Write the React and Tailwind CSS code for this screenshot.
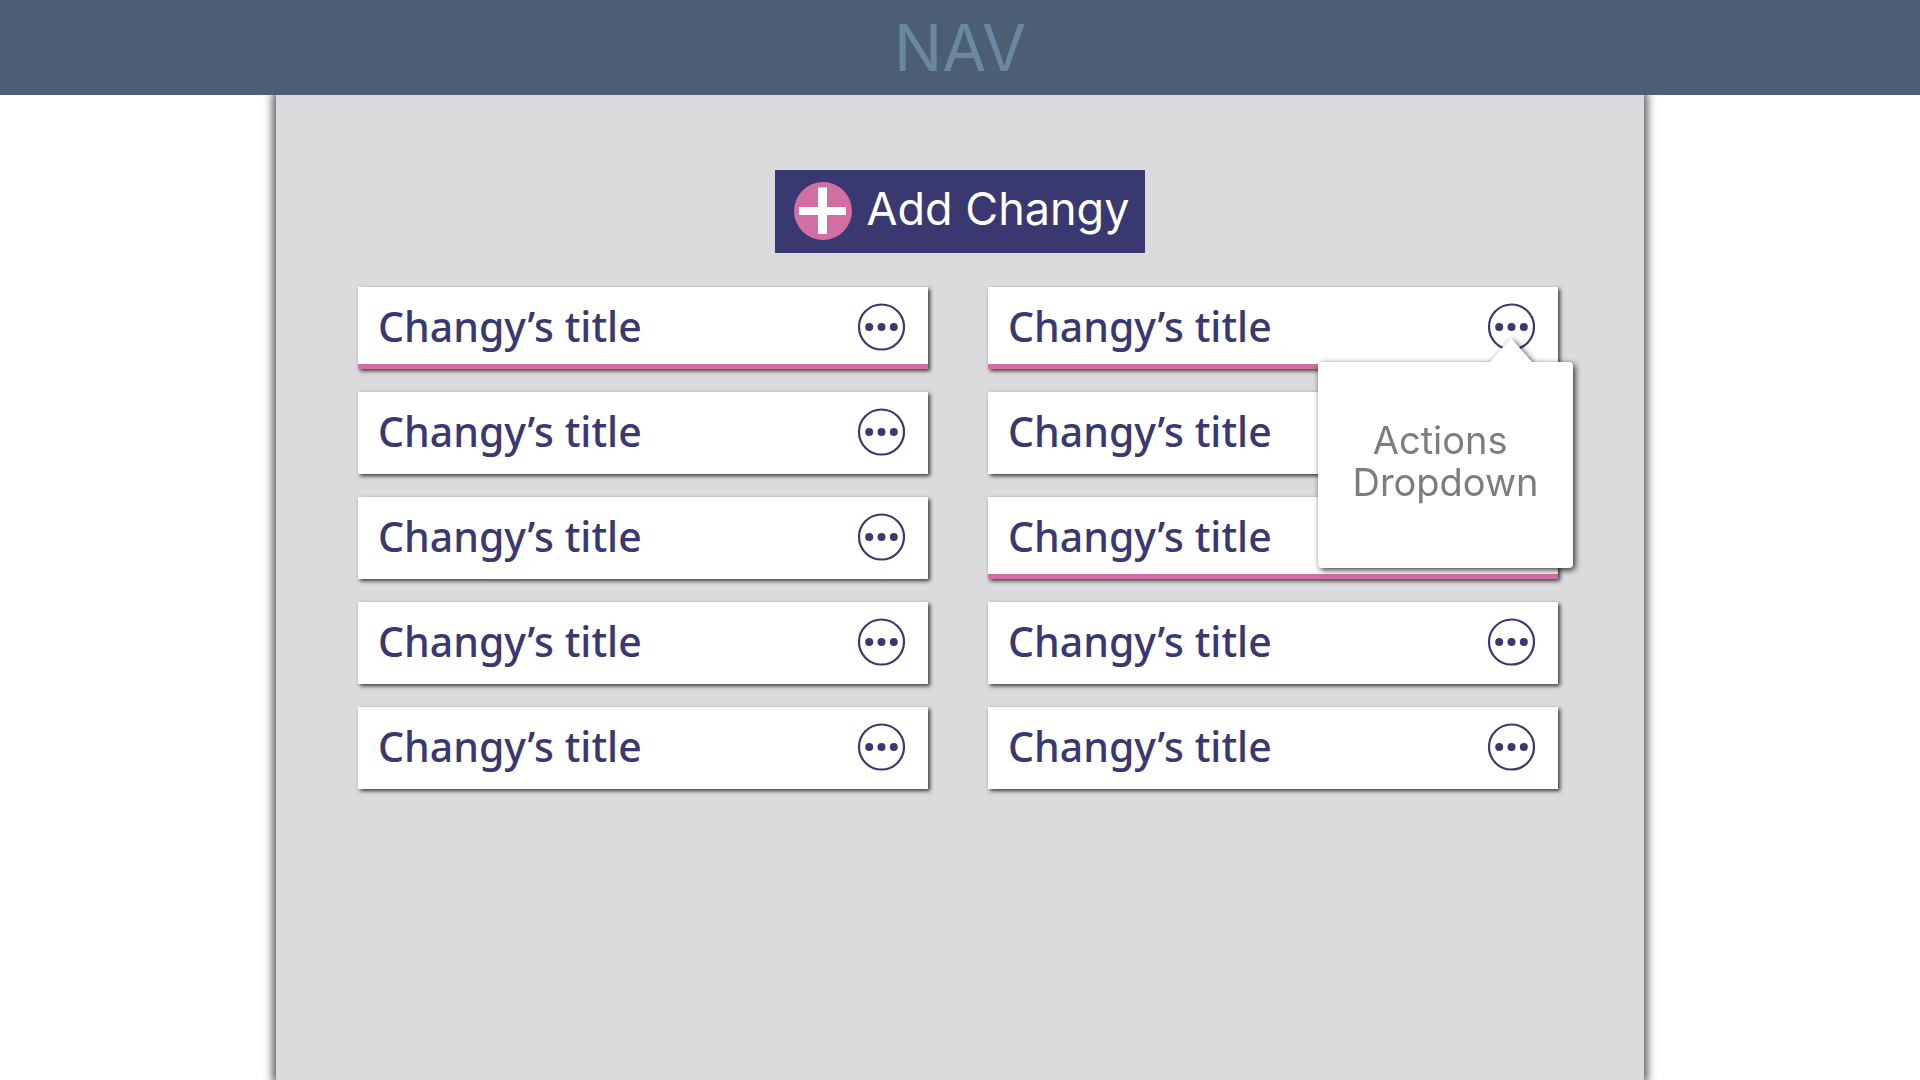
const leftColumn = [true, false, false, false, false];
const rightColumn = [true, false, true, false, false];

function PlusIcon() {
  return (
    <svg viewBox="0 0 58 58" className="size-[58px] shrink-0" aria-hidden="true">
      <circle cx="29" cy="29" r="29" fill="#d16fa4" />
      <path d="M5 25h19V5.500h9V25h19v8H33v19h-9V33H5z" fill="#fff" />
    </svg>
  );
}

function MoreIcon() {
  return (
    <svg viewBox="0 0 48 48" className="size-12" aria-hidden="true">
      <circle cx="24.500" cy="24" r="22.500" fill="none" stroke="#3a3870" strokeWidth="2.200" />
      <g fill="#3a3870">
        <circle cx="12.200" cy="24" r="4" />
        <circle cx="24.500" cy="24" r="4" />
        <circle cx="36.800" cy="24" r="4" />
      </g>
    </svg>
  );
}

function ActionsDropdown() {
  return (
    <div className="absolute top-[75px] -right-[15px] z-10 w-[255px] drop-shadow-[2px_2px_3px_rgba(0,0,0,0.8)]">
      <svg viewBox="0 0 44 25" className="absolute -top-6 right-10 h-[25px] w-11" aria-hidden="true">
        <path d="M22 0 44 25H0z" fill="#fff" />
      </svg>
      <div className="flex h-[206px] items-center justify-center rounded bg-white pb-2">
        <p className="text-center font-['Inter',sans-serif] text-[38px] leading-[42px] text-[#7d7d7d]">
          Actions&nbsp;
          <br />
          Dropdown
        </p>
      </div>
    </div>
  );
}

function Card({ marked, open }) {
  return (
    <li className="relative">
      <div
        className={
          "flex h-[82px] items-center justify-between bg-white pr-[23px] pl-5 shadow-[2px_2px_4px_rgba(0,0,0,0.75)] " +
          (marked ? "border-b-[5px] border-[#d16fa4] pt-[3px]" : "pb-0.5")
        }
      >
        <h2 className="pb-0.5 font-['Noto_Sans',sans-serif] text-[41px] leading-[54px] font-medium text-[#3a3870]">
          Changy’s title
        </h2>
        <button type="button" aria-label="Actions" aria-expanded={open} className="rounded-full">
          <MoreIcon />
        </button>
      </div>
      {open && <ActionsDropdown />}
    </li>
  );
}

export default function App() {
  return (
    <div className="flex min-h-screen flex-col overflow-x-hidden bg-white">
      <nav className="z-10 flex h-[95px] items-center justify-center bg-[#4b5e73]">
        <span className="font-['Inter',sans-serif] text-[64px] leading-[72px] text-[#6b88a3]">NAV</span>
      </nav>
      <main className="mx-auto flex w-full max-w-[1368px] flex-1 flex-col bg-[#dbdbdd] pt-[75px] pr-[86px] pb-12 pl-[82px] shadow-[0_0_9px_3px_rgba(0,0,0,0.7)]">
        <button
          type="button"
          className="ml-1 flex h-[83px] items-center gap-3.5 self-center bg-[#3a3870] pr-[15px] pb-0.5 pl-[19px] font-['Inter',sans-serif] text-[45px] leading-[50px] text-white"
        >
          <PlusIcon />
          <span className="pb-1">Add Changy</span>
        </button>
        <div className="mt-[34px] grid grid-cols-2 gap-x-[60px]">
          <ul className="flex flex-col gap-[23px]">
            {leftColumn.map((marked, i) => (
              <Card key={i} marked={marked} open={false} />
            ))}
          </ul>
          <ul className="flex flex-col gap-[23px]">
            {rightColumn.map((marked, i) => (
              <Card key={i} marked={marked} open={i === 0} />
            ))}
          </ul>
        </div>
      </main>
    </div>
  );
}
